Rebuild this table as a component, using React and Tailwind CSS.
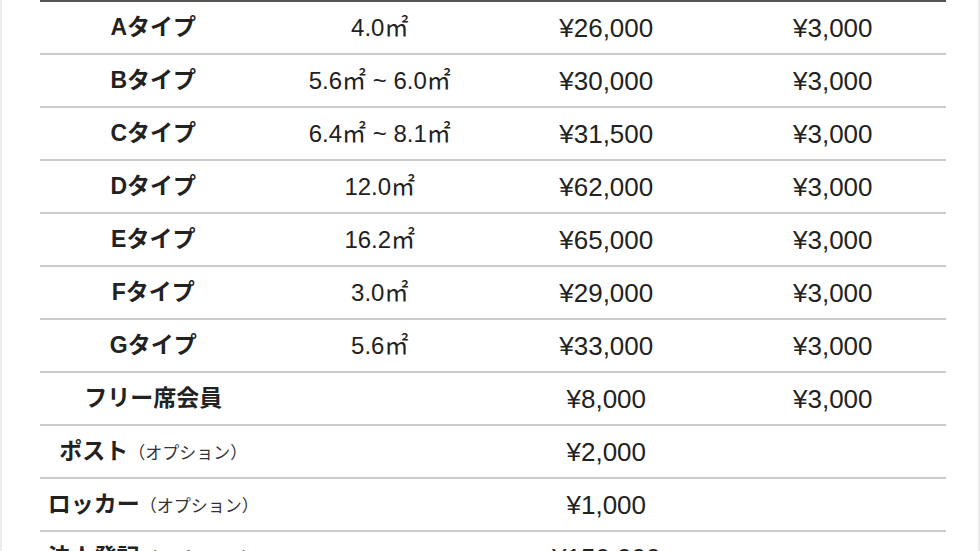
import React from "react";

const FONT = "font-['Liberation_Sans','Noto_Sans_CJK_JP',sans-serif]";

const ROWS = [
  { name: "Aタイプ", area: "4.0㎡", price: "¥26,000", fee: "¥3,000" },
  { name: "Bタイプ", area: "5.6㎡ ~ 6.0㎡", price: "¥30,000", fee: "¥3,000" },
  { name: "Cタイプ", area: "6.4㎡ ~ 8.1㎡", price: "¥31,500", fee: "¥3,000" },
  { name: "Dタイプ", area: "12.0㎡", price: "¥62,000", fee: "¥3,000" },
  { name: "Eタイプ", area: "16.2㎡", price: "¥65,000", fee: "¥3,000" },
  { name: "Fタイプ", area: "3.0㎡", price: "¥29,000", fee: "¥3,000" },
  { name: "Gタイプ", area: "5.6㎡", price: "¥33,000", fee: "¥3,000" },
  { name: "フリー席会員", area: "", price: "¥8,000", fee: "¥3,000" },
  { name: "ポスト", note: "（オプション）", area: "", price: "¥2,000", fee: "" },
  { name: "ロッカー", note: "（オプション）", area: "", price: "¥1,000", fee: "" },
  { name: "法人登記", note: "（オプション）", area: "", price: "¥150,000", fee: "" },
];

function Row({ r }) {
  return (
    <div className="grid grid-cols-4 h-[53px] border-b-2 border-[#cbcbcb] items-center text-[#222]">
      <div className="text-center font-bold text-[23px] whitespace-nowrap">
        {r.name}
        {r.note && <span className="font-normal text-[17px] text-[#333]">{r.note}</span>}
      </div>
      <div className="text-center text-[24px]">{r.area}</div>
      <div className="text-center text-[26px] pt-[2px]">{r.price}</div>
      <div className="text-center text-[26px] pt-[2px]">{r.fee}</div>
    </div>
  );
}

export default function App() {
  return (
    <div className={`h-[551px] w-[980px] overflow-hidden bg-white border-x-2 border-[#ececec] ${FONT}`}>
      <div className="pl-[38px] pr-[32px]">
        <div className="border-t-2 border-[#555]">
          {ROWS.map((r) => <Row key={r.name} r={r} />)}
        </div>
      </div>
    </div>
  );
}
